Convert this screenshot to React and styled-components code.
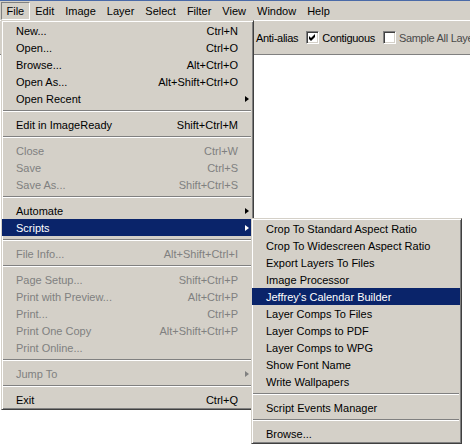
import React from 'react';
import styled, { createGlobalStyle, css } from 'styled-components';

const GlobalStyle = createGlobalStyle`
  html, body {
    margin: 0;
    padding: 0;
    background: #fff;
  }
  body {
    font-family: "Liberation Sans", Arial, sans-serif;
    font-size: 11px;
    color: #000;
  }
`;

const Window = styled.div`
  position: relative;
  width: 470px;
  height: 446px;
  overflow: hidden;
  background: #fff;
`;

const MenuBar = styled.div`
  display: flex;
  align-items: flex-start;
  box-sizing: border-box;
  height: 20px;
  padding: 1px 0 0 1px;
  border-top: 1px solid #4a6aa8;
  background: #d4d0c8;
`;

const BarItem = styled.div`
  height: 18px;
  box-sizing: border-box;
  line-height: 16px;
  padding: 0 4.5px;
  border: 1px solid transparent;
  white-space: nowrap;

  ${({ $open }) =>
    $open &&
    css`
      border-color: #808080 #fff #fff #808080;
    `}
`;

const OptionsBar = styled.div`
  display: flex;
  align-items: center;
  box-sizing: border-box;
  height: 35px;
  padding-left: 256px;
  border-top: 1px solid #fff;
  border-bottom: 1px solid #808080;
  background: #d4d0c8;
  letter-spacing: -0.3px;
  white-space: nowrap;
`;

const OptionText = styled.span`
  color: ${({ $muted }) => ($muted ? '#4a4a4a' : '#000')};
  margin-right: ${({ $gap }) => $gap || 0}px;
`;

const Option = styled.label`
  display: flex;
  align-items: center;
  gap: 3px;
  margin-right: ${({ $gap }) => $gap || 0}px;
`;

const Check = styled.span`
  display: inline-flex;
  align-items: center;
  justify-content: center;
  width: 13px;
  height: 13px;
  box-sizing: border-box;
  border: 1px solid;
  border-color: #808080 #fff #fff #808080;
  box-shadow: inset 1px 1px #404040, inset -1px -1px #d4d0c8;
  background: #fff;
`;

const Menu = styled.div`
  position: absolute;
  left: ${({ $left }) => $left}px;
  top: ${({ $top }) => $top}px;
  width: ${({ $width }) => $width}px;
  box-sizing: border-box;
  padding: 1px 1px 1px 0;
  border: 1px solid;
  border-color: #d4d0c8 #404040 #404040 #d4d0c8;
  box-shadow: inset 1px 1px #fff, inset -1px -1px #808080;
  background: #d4d0c8;
`;

const Row = styled.div`
  display: flex;
  align-items: center;
  height: 17px;
  padding-left: 14px;
  white-space: nowrap;
  color: ${({ $disabled }) => ($disabled ? '#808080' : '#000')};

  ${({ $active }) =>
    $active &&
    css`
      background: #0a246a;
      color: #fff;
    `}
`;

const Label = styled.span`
  flex: 1;
`;

const Shortcut = styled.span``;

const ArrowCell = styled.span`
  display: flex;
  justify-content: flex-end;
  width: 14px;
  box-sizing: border-box;
  padding-right: 3px;
`;

const Arrow = styled.span`
  width: 0;
  height: 0;
  border-left: 4px solid currentColor;
  border-top: 3.5px solid transparent;
  border-bottom: 3.5px solid transparent;
`;

const Separator = styled.div`
  margin: 3px 1px 4px;
  border-top: 1px solid #808080;
  border-bottom: 1px solid #fff;
`;

const barItems = ['File', 'Edit', 'Image', 'Layer', 'Select', 'Filter', 'View', 'Window', 'Help'];

const fileMenu = [
  [
    { label: 'New...', sc: 'Ctrl+N' },
    { label: 'Open...', sc: 'Ctrl+O' },
    { label: 'Browse...', sc: 'Alt+Ctrl+O' },
    { label: 'Open As...', sc: 'Alt+Shift+Ctrl+O' },
    { label: 'Open Recent', sub: true },
  ],
  [{ label: 'Edit in ImageReady', sc: 'Shift+Ctrl+M' }],
  [
    { label: 'Close', sc: 'Ctrl+W', off: true },
    { label: 'Save', sc: 'Ctrl+S', off: true },
    { label: 'Save As...', sc: 'Shift+Ctrl+S', off: true },
  ],
  [
    { label: 'Automate', sub: true },
    { label: 'Scripts', sub: true, active: true },
  ],
  [{ label: 'File Info...', sc: 'Alt+Shift+Ctrl+I', off: true }],
  [
    { label: 'Page Setup...', sc: 'Shift+Ctrl+P', off: true },
    { label: 'Print with Preview...', sc: 'Alt+Ctrl+P', off: true },
    { label: 'Print...', sc: 'Ctrl+P', off: true },
    { label: 'Print One Copy', sc: 'Alt+Shift+Ctrl+P', off: true },
    { label: 'Print Online...', off: true },
  ],
  [{ label: 'Jump To', sub: true, off: true }],
  [{ label: 'Exit', sc: 'Ctrl+Q' }],
];

const scriptsMenu = [
  [
    { label: 'Crop To Standard Aspect Ratio' },
    { label: 'Crop To Widescreen Aspect Ratio' },
    { label: 'Export Layers To Files' },
    { label: 'Image Processor' },
    { label: "Jeffrey's Calendar Builder", active: true },
    { label: 'Layer Comps To Files' },
    { label: 'Layer Comps to PDF' },
    { label: 'Layer Comps to WPG' },
    { label: 'Show Font Name' },
    { label: 'Write Wallpapers' },
  ],
  [{ label: 'Script Events Manager' }],
  [{ label: 'Browse...' }],
];

const CheckMark = () => (
  <svg width="7" height="7" viewBox="0 0 7 7">
    <path d="M0 2 L2 4 L6 0 L6 3 L2 7 L0 5 Z" fill="#000" />
  </svg>
);

const DropMenu = ({ groups, left, top, width }) => (
  <Menu $left={left} $top={top} $width={width}>
    {groups.map((group, g) => (
      <React.Fragment key={g}>
        {g > 0 && <Separator />}
        {group.map((item) => (
          <Row key={item.label} $disabled={item.off} $active={item.active}>
            <Label>{item.label}</Label>
            {item.sc && <Shortcut>{item.sc}</Shortcut>}
            <ArrowCell>{item.sub && <Arrow />}</ArrowCell>
          </Row>
        ))}
      </React.Fragment>
    ))}
  </Menu>
);

const App = () => (
  <>
    <GlobalStyle />
    <Window>
      <MenuBar>
        {barItems.map((name) => (
          <BarItem key={name} $open={name === 'File'}>
            {name}
          </BarItem>
        ))}
      </MenuBar>

      <OptionsBar>
        <OptionText $gap={8}>Anti-alias</OptionText>
        <Option $gap={8}>
          <Check>
            <CheckMark />
          </Check>
          <OptionText>Contiguous</OptionText>
        </Option>
        <Option>
          <Check />
          <OptionText $muted>Sample All Layers</OptionText>
        </Option>
      </OptionsBar>

      <DropMenu groups={fileMenu} left={1} top={20} width={253} />
      <DropMenu groups={scriptsMenu} left={251} top={218} width={211} />
    </Window>
  </>
);

export default App;
